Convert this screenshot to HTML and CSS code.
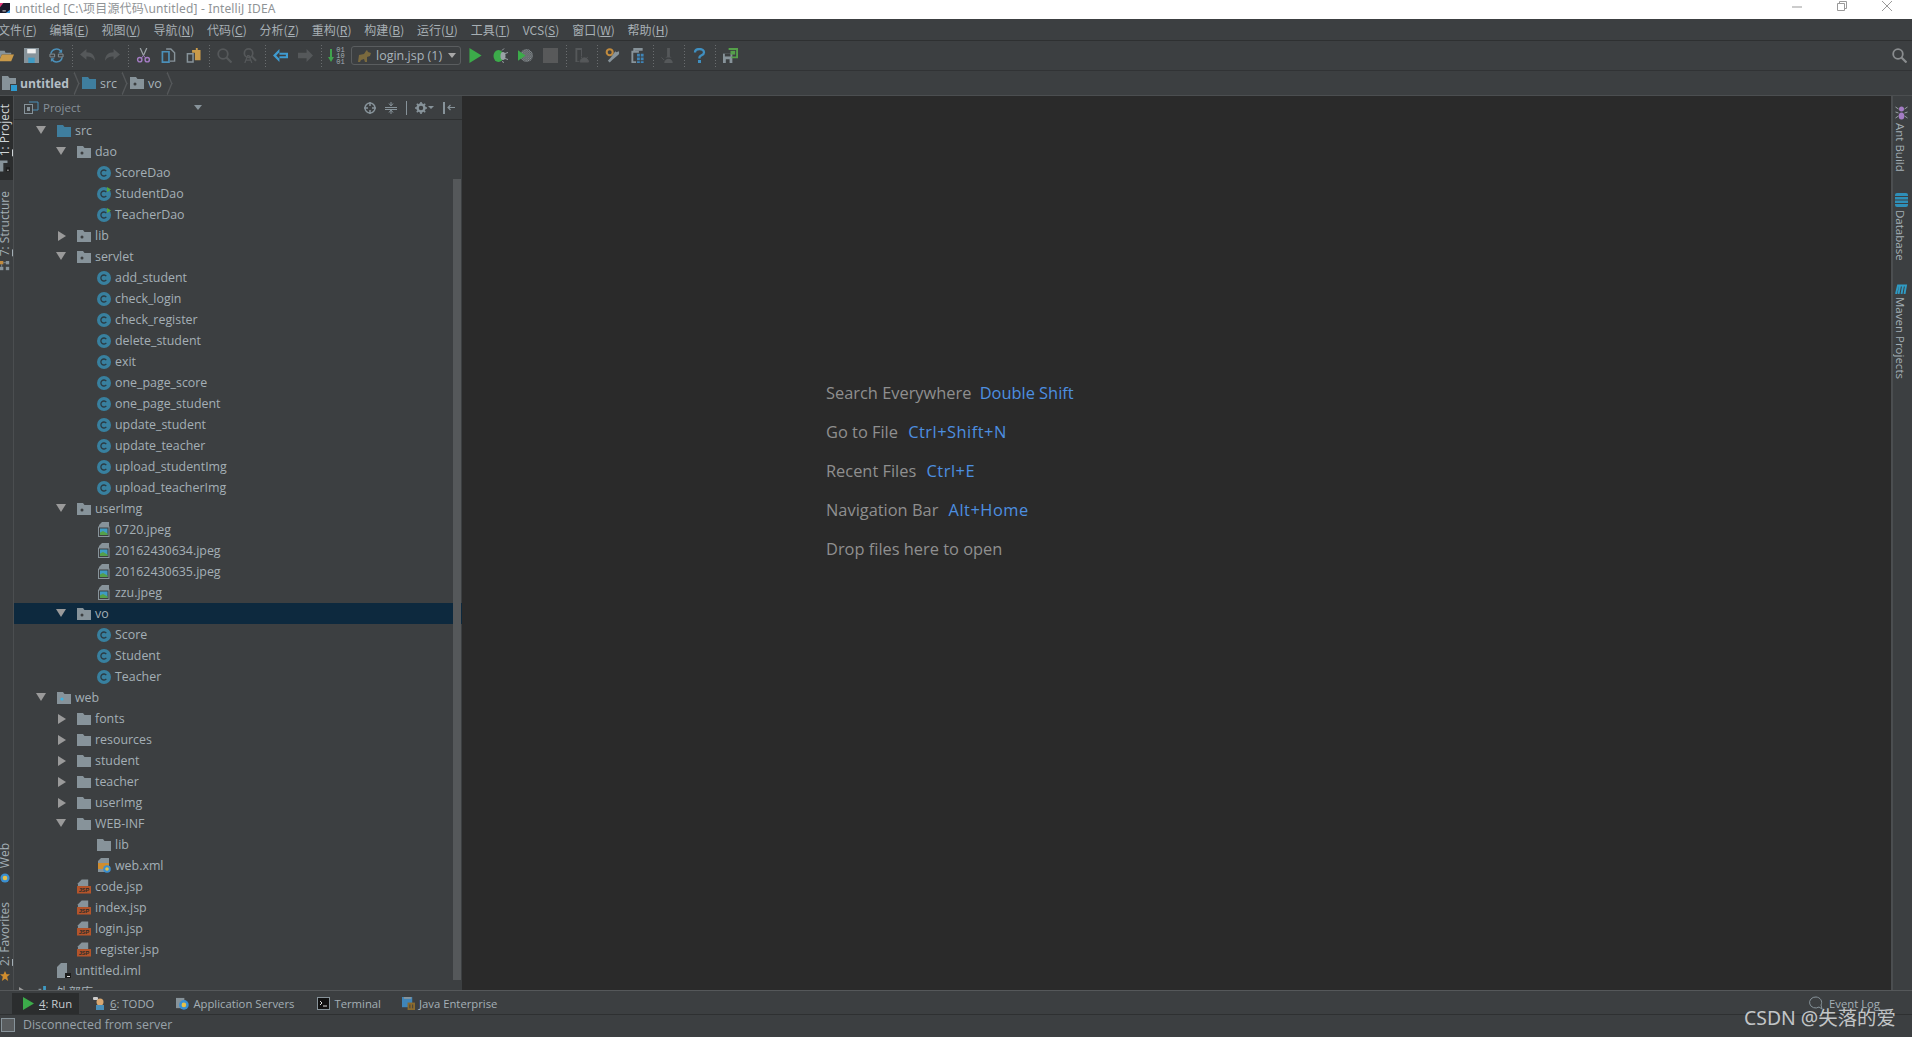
FILE: index.html
```html
<!DOCTYPE html>
<html lang="zh">
<head>
<meta charset="utf-8">
<title>untitled - IntelliJ IDEA</title>
<link rel="stylesheet" href="styles.css">
</head>
<body>
<svg class="defs" width="0" height="0" aria-hidden="true">
  <symbol id="pkg" viewBox="0 0 14 12"><path d="M0 0h6l1.500 2H14v10H0z" fill="#87939a"/><circle cx="5" cy="7" r="1.500" fill="#3c3f41"/></symbol>
  <symbol id="fld" viewBox="0 0 14 12"><path d="M0 0h6l1.500 2H14v10H0z" fill="#87939a"/></symbol>
  <symbol id="src" viewBox="0 0 14 12"><path d="M0 0h6l1.500 2H14v10H0z" fill="#3f7e9e"/></symbol>
  <symbol id="web" viewBox="0 0 14 12"><path d="M0 0h6l1.500 2H14v10H0z" fill="#87939a"/><circle cx="5" cy="7" r="1.600" fill="#3fb2e0"/></symbol>
  <symbol id="cls" viewBox="0 0 14 14"><circle cx="7" cy="7" r="7" fill="#38809f"/><path d="M9.300 5.200A3 3 0 1 0 9.300 8.800" fill="none" stroke="#2b3a42" stroke-width="1.300"/></symbol>
  <symbol id="clr" viewBox="0 0 14 14"><circle cx="7" cy="7" r="7" fill="#38809f"/><path d="M9.300 5.200A3 3 0 1 0 9.300 8.800" fill="none" stroke="#2b3a42" stroke-width="1.300"/><path d="M10 0l4 2.500L10 5z" fill="#54a83c"/></symbol>
  <symbol id="img" viewBox="0 0 12 15"><path d="M4 0h7v5H1V3z" fill="#87939a"/><rect x=".5" y="5" width="10.500" height="9.500" fill="#3c3f41" stroke="#87939a"/><rect x="2" y="6.500" width="7.500" height="6.500" fill="#3f9bc4"/><path d="M2 13l0-2.500 3-1.500 4.500 2.500V13z" fill="#55a04a"/></symbol>
  <symbol id="jsp" viewBox="0 0 15 15"><path d="M5 0h7v7H1V4z" fill="#87939a"/><rect y="7" width="15" height="8" fill="#b4542a"/><text x="7.500" y="13.600" class="jsp-t">JSP</text></symbol>
  <symbol id="xml" viewBox="0 0 14 15"><path d="M4 0h8v14H1V3z" fill="#87939a"/><rect x="1" y="5" width="11" height="6" fill="#d08d2e"/><circle cx="10" cy="11" r="3.800" fill="#3a8fd0"/><circle cx="10" cy="11" r="1.800" fill="#e5c14a"/></symbol>
  <symbol id="iml" viewBox="0 0 14 15"><path d="M4 0h6v15H0V4z" fill="#87939a"/><rect x="8" y="10" width="6" height="5" fill="#1d1d1d"/><rect x="10" y="13" width="3" height="1" fill="#ddd"/></symbol>
  <symbol id="lib" viewBox="0 0 14 13"><rect x="0" y="3" width="3" height="10" fill="#87939a"/><rect x="5" y="0" width="3" height="13" fill="#3f9bc4"/><rect x="10" y="6" width="3" height="7" fill="#87939a"/></symbol>
  <symbol id="mod" viewBox="0 0 15 15"><path d="M0 0h6l1.500 2H14v6H8v6H0z" fill="#87939a"/><rect x="9" y="9" width="6" height="6" fill="#2f9bd0"/></symbol>
</svg>

<div class="app">
  <header class="titlebar">
    <svg class="app-logo" viewBox="0 0 12 12"><rect width="12" height="12" fill="#1a1a2a"/><path d="M0 0h4L0 5z" fill="#e0387a"/><path d="M12 12H7l5-4z" fill="#3a9be0"/><rect x="3" y="9" width="4" height="1" fill="#fff"/></svg>
    <span class="title-text">untitled [C:\项目源代码\untitled] - IntelliJ IDEA</span>
    <div class="win-controls">
      <svg viewBox="0 0 10 10"><path d="M0 6h10" stroke="#999" fill="none"/></svg>
      <svg viewBox="0 0 10 10"><path d="M.5 2.500h7v7h-7zM2.500 2.500v-2h7v7h-2" stroke="#999" fill="none"/></svg>
      <svg viewBox="0 0 10 10"><path d="M0 0l10 10M10 0L0 10" stroke="#999" fill="none"/></svg>
    </div>
  </header>

  <nav class="menubar">
    <span class="m-first">文件(<u>F</u>)</span><span>编辑(<u>E</u>)</span><span>视图(<u>V</u>)</span><span>导航(<u>N</u>)</span><span>代码(<u>C</u>)</span><span>分析(<u>Z</u>)</span><span>重构(<u>R</u>)</span><span>构建(<u>B</u>)</span><span>运行(<u>U</u>)</span><span>工具(<u>T</u>)</span><span>VCS(<u>S</u>)</span><span>窗口(<u>W</u>)</span><span>帮助(<u>H</u>)</span>
  </nav>

  <div class="toolbar">
    <div class="tb"><svg viewBox="0 0 16 14"><path d="M0 2h6l1 2h6v2H3L0 12z" fill="#87939a"/><path d="M3 6h13l-3 7H0z" fill="#c99a4a"/></svg></div>
    <div class="tb"><svg viewBox="0 0 14 14"><path d="M0 0h14v14H0z" fill="#87939a"/><rect x="3" y="1" width="8" height="4" fill="#eee"/><rect x="4" y="9" width="6" height="5" fill="#3f9bc4"/></svg></div>
    <div class="tb"><svg viewBox="0 0 16 16"><path d="M2 6a6 6 0 0 1 11-2M14 10a6 6 0 0 1-11 2" fill="none" stroke="#4b8fb8" stroke-width="1.600"/><path d="M14 1v4h-4zM2 15v-4h4z" fill="#4b8fb8"/><path d="M1 6.500h5v3H1zM10 6.500h5v3h-5z" fill="none" stroke="#87939a"/></svg></div>
    <i class="sep"></i>
    <div class="tb"><svg viewBox="0 0 14 12"><path d="M0 5l6-5v3c5 0 8 3 8 8-2-3-4-4-8-4v3z" fill="#55585a"/></svg></div>
    <div class="tb"><svg viewBox="0 0 14 12"><path d="M14 5L8 0v3C3 3 0 6 0 11c2-3 4-4 8-4v3z" fill="#55585a"/></svg></div>
    <i class="sep"></i>
    <div class="tb"><svg viewBox="0 0 14 16"><path d="M3.500 0l3.500 8M10.500 0L7 8" stroke="#9aa2a6" stroke-width="1.300" fill="none"/><circle cx="3" cy="12.500" r="2.300" fill="none" stroke="#a47cc4" stroke-width="1.500"/><circle cx="11" cy="12.500" r="2.300" fill="none" stroke="#a47cc4" stroke-width="1.500"/><path d="M4.500 11L7 8l2.500 3" stroke="#a47cc4" fill="none"/></svg></div>
    <div class="tb"><svg viewBox="0 0 15 16"><path d="M5 1h5l4 4v9H9" fill="none" stroke="#87939a" stroke-width="1.500"/><path d="M1 4h7v11H1z" fill="none" stroke="#4b8fb8" stroke-width="1.800"/></svg></div>
    <div class="tb"><svg viewBox="0 0 15 16"><path d="M6 2h4V0h2v2h3v11H9V5H6z" fill="#c99a4a"/><path d="M1 6h6v9H1z" fill="none" stroke="#87939a" stroke-width="1.600"/></svg></div>
    <i class="sep"></i>
    <div class="tb"><svg viewBox="0 0 15 15"><circle cx="6" cy="6" r="4.800" fill="none" stroke="#55585a" stroke-width="1.800"/><path d="M9.500 9.500L14.500 14.500" stroke="#55585a" stroke-width="2.200"/></svg></div>
    <div class="tb"><svg viewBox="0 0 16 16"><circle cx="7" cy="5.500" r="4.500" fill="none" stroke="#55585a" stroke-width="1.800"/><path d="M10.500 9L15 13.500" stroke="#55585a" stroke-width="2.200"/><path d="M3 16l3-8h1.500l3 8M4.300 13h4.500" fill="none" stroke="#55585a" stroke-width="1.300"/></svg></div>
    <i class="sep"></i>
    <div class="tb"><svg viewBox="0 0 14 12"><path d="M6 0L0 6l6 6V8.500h8v-5H6z" fill="#3f9bd0"/><path d="M6 3L3 6l3 3V6.800h6V5.200H6z" fill="#3c3f41"/></svg></div>
    <div class="tb"><svg viewBox="0 0 14 12"><path d="M8 0l6 6-6 6V8.500H0v-5h8z" fill="#55585a"/></svg></div>
    <i class="sep"></i>
    <div class="tb tb-make"><svg viewBox="0 0 6 14"><path d="M2 0h2v8h2l-3 5-3-5h2z" fill="#3fa34d"/></svg><span class="bits">01<br>10<br>01</span></div>
    <div class="combo">
      <svg viewBox="0 0 15 14"><path d="M1 13l1-7 5-1 2-3 1-1 1 2 3 1-1 3-3 1v5H8l-1-3-3 1-1 2z" fill="#7b6a3e"/></svg>
      <span>login.jsp (1)</span><b class="caret"></b>
    </div>
    <div class="tb"><svg viewBox="0 0 13 16"><path d="M0 0l13 8-13 8z" fill="#3cab4a"/></svg></div>
    <div class="tb"><svg viewBox="0 0 15 14"><ellipse cx="5.500" cy="7.500" rx="5" ry="6" fill="#3cab4a"/><ellipse cx="10" cy="7.500" rx="2.500" ry="4" fill="#9aa2a6"/><path d="M9 2l2-2M9 13l2 1M12 5l3-1M12 10l3 1" stroke="#9aa2a6"/></svg></div>
    <div class="tb"><svg viewBox="0 0 14 14"><defs><pattern id="chk" width="2" height="2" patternUnits="userSpaceOnUse"><rect width="1" height="1" fill="#9aa2a6"/><rect x="1" y="1" width="1" height="1" fill="#9aa2a6"/></pattern></defs><circle cx="8" cy="7" r="6" fill="url(#chk)"/><path d="M0 2l7 5-7 5z" fill="#3cab4a"/></svg></div>
    <div class="tb"><svg viewBox="0 0 12 12"><rect width="12" height="12" fill="#58595a"/></svg></div>
    <i class="sep"></i>
    <div class="tb"><svg viewBox="0 0 15 16"><path d="M1 0h7v9H7V2H3v12h2v1H1z" fill="#55585a"/><path d="M6 15a4.500 4.500 0 0 1 9 0zM7 9.500l1 1.500M14 9.500l-1 1.500" fill="#55585a" stroke="#55585a"/></svg></div>
    <i class="sep"></i>
    <div class="tb"><svg viewBox="0 0 16 15"><circle cx="5" cy="4" r="3.200" fill="none" stroke="#c08a3e" stroke-width="2.200"/><path d="M15 3l-3 1-1-1-5 7-3 3 2 2 3-3 6-5 1-1z" fill="#87939a"/></svg></div>
    <div class="tb"><svg viewBox="0 0 15 16"><path d="M1 3h8v2H3v9h3v2H1z" fill="#87939a"/><path d="M3 0h10v3H5v1H3z" fill="#87939a"/><path d="M7 6h3v3H7zM11 6h3v3h-3zM7 10h3v3H7zM11 10h3v3h-3zM7 14h3v2H7zM11 14h3v2h-3z" fill="#3f85b8"/></svg></div>
    <i class="sep"></i>
    <div class="tb"><svg viewBox="0 0 15 16"><path d="M6 0h3v9l2 1H4l2-1z" fill="#55585a"/><path d="M3 16a4.500 4.500 0 0 1 9 0z" fill="#55585a"/><path d="M0 10l3 3" stroke="#55585a"/></svg></div>
    <i class="sep"></i>
    <div class="tb"><svg viewBox="0 0 11 15"><path d="M1 4.500C1 2 3 1 5.500 1S10 2.500 10 4.500 8 7 6.500 8 5.500 9 5.500 10.500" fill="none" stroke="#3f8fc0" stroke-width="2.300"/><rect x="4" y="12" width="3" height="3" fill="#3f8fc0"/></svg></div>
    <i class="sep"></i>
    <div class="tb"><svg viewBox="0 0 16 16"><path d="M0 6h10v10H0z" fill="#87939a"/><rect x="2" y="6" width="6" height="3" fill="#3c3f41"/><rect x="3" y="12" width="4" height="4" fill="#3c3f41"/><path d="M6 1h9v9H9" fill="none" stroke="#55a04a" stroke-width="2"/><rect x="8" y="3" width="5" height="4" fill="#55a04a"/></svg></div>
    <div class="tb tb-search"><svg viewBox="0 0 15 15"><circle cx="6" cy="6" r="4.800" fill="none" stroke="#8a8d8f" stroke-width="1.800"/><path d="M9.500 9.500L14.500 14.500" stroke="#8a8d8f" stroke-width="2.200"/></svg></div>
  </div>

  <div class="navbar">
    <svg class="nav-ic" viewBox="0 0 15 15"><use href="#mod"/></svg><b>untitled</b><i class="chev"></i>
    <svg class="nav-ic nav-f" viewBox="0 0 14 12"><use href="#src"/></svg><span>src</span><i class="chev"></i>
    <svg class="nav-ic nav-f" viewBox="0 0 14 12"><use href="#pkg"/></svg><span>vo</span><i class="chev"></i>
  </div>

  <main class="main">
    <aside class="strip-left">
      <div class="sl-group">
        <div class="sl-item sl-active"><span><u>1</u>: Project</span><svg viewBox="0 0 12 13"><path d="M0 0h9v3H4v10H0z" fill="#87939a"/><rect x="7" y="8" width="5" height="5" fill="#1d1d1d"/><rect x="8.500" y="11" width="2" height="1" fill="#ddd"/></svg></div>
        <div class="sl-item"><span><u>7</u>: Structure</span><svg viewBox="0 0 12 12"><rect width="4" height="4" fill="#c08a3e"/><rect x="7" width="4" height="4" fill="#87939a"/><rect y="7" width="4" height="4" fill="#87939a"/><rect x="7" y="7" width="4" height="4" fill="#87939a"/><path d="M4 2h3M2 4v3" stroke="#87939a"/></svg></div>
      </div>
      <div class="sl-group">
        <div class="sl-item"><span>Web</span><svg viewBox="0 0 12 12"><circle cx="6" cy="6" r="5.500" fill="#3a8fd0"/><circle cx="6" cy="6" r="2.800" fill="#e5c14a"/></svg></div>
        <div class="sl-item sl-fav"><span><u>2</u>: Favorites</span><svg viewBox="0 0 12 12"><path d="M6 0l1.800 4H12L8.600 7l1.200 5L6 9.300 2.200 12l1.200-5L0 4h4.200z" fill="#d08d2e"/></svg></div>
      </div>
    </aside>

    <section class="project">
      <div class="p-head">
        <svg class="p-ic" viewBox="0 0 15 13"><path d="M5 1h9v8H9" fill="none" stroke="#4b8fb8"/><rect x=".5" y="3.500" width="8" height="9" fill="#3c3f41" stroke="#87939a"/><rect x="3" y="6" width="3" height="4" fill="#87939a"/></svg>
        <span class="p-title">Project</span>
        <b class="caret p-caret"></b>
        <div class="p-actions">
          <svg viewBox="0 0 12 12"><circle cx="6" cy="6" r="5" fill="none" stroke="#87939a" stroke-width="1.500"/><path d="M6 0v4M6 8v4M0 6h4M8 6h4" stroke="#87939a" stroke-width="1.500"/></svg>
          <svg viewBox="0 0 12 12"><path d="M0 5.500h12M0 7.500h12M6 0v3M4 1.500L6 4l2-2.500M6 12V9M4 10.500L6 8l2 2.500" stroke="#87939a" fill="none"/></svg>
          <i class="p-sep"></i>
          <svg viewBox="0 0 12 12"><circle cx="6" cy="6" r="3.500" fill="none" stroke="#87939a" stroke-width="2.500"/><path d="M6 0v2M6 10v2M0 6h2M10 6h2M1.800 1.800l1.400 1.400M8.800 8.800l1.400 1.400M1.800 10.200l1.400-1.400M8.800 3.200l1.400-1.400" stroke="#87939a" stroke-width="1.600"/></svg>
          <b class="caret p-minicaret"></b>
          <svg viewBox="0 0 12 12"><rect x="0" y="0" width="2" height="12" fill="#87939a"/><path d="M12 5.500H5M7.500 3L5 5.500 7.500 8" stroke="#87939a" fill="none" stroke-width="1.200"/></svg>
        </div>
      </div>
      <div class="tree-wrap">
        <ul class="tree">
          <li class="row l0"><i class="arrow down"></i><svg class="ic f"><use href="#src"/></svg>src</li>
          <li class="row l1"><i class="arrow down"></i><svg class="ic f"><use href="#pkg"/></svg>dao</li>
          <li class="row l2"><i class="arrow"></i><svg class="ic c"><use href="#cls"/></svg>ScoreDao</li>
          <li class="row l2"><i class="arrow"></i><svg class="ic c"><use href="#clr"/></svg>StudentDao</li>
          <li class="row l2"><i class="arrow"></i><svg class="ic c"><use href="#clr"/></svg>TeacherDao</li>
          <li class="row l1"><i class="arrow right"></i><svg class="ic f"><use href="#pkg"/></svg>lib</li>
          <li class="row l1"><i class="arrow down"></i><svg class="ic f"><use href="#pkg"/></svg>servlet</li>
          <li class="row l2"><i class="arrow"></i><svg class="ic c"><use href="#cls"/></svg>add_student</li>
          <li class="row l2"><i class="arrow"></i><svg class="ic c"><use href="#cls"/></svg>check_login</li>
          <li class="row l2"><i class="arrow"></i><svg class="ic c"><use href="#cls"/></svg>check_register</li>
          <li class="row l2"><i class="arrow"></i><svg class="ic c"><use href="#cls"/></svg>delete_student</li>
          <li class="row l2"><i class="arrow"></i><svg class="ic c"><use href="#cls"/></svg>exit</li>
          <li class="row l2"><i class="arrow"></i><svg class="ic c"><use href="#cls"/></svg>one_page_score</li>
          <li class="row l2"><i class="arrow"></i><svg class="ic c"><use href="#cls"/></svg>one_page_student</li>
          <li class="row l2"><i class="arrow"></i><svg class="ic c"><use href="#cls"/></svg>update_student</li>
          <li class="row l2"><i class="arrow"></i><svg class="ic c"><use href="#cls"/></svg>update_teacher</li>
          <li class="row l2"><i class="arrow"></i><svg class="ic c"><use href="#cls"/></svg>upload_studentImg</li>
          <li class="row l2"><i class="arrow"></i><svg class="ic c"><use href="#cls"/></svg>upload_teacherImg</li>
          <li class="row l1"><i class="arrow down"></i><svg class="ic f"><use href="#pkg"/></svg>userImg</li>
          <li class="row l2"><i class="arrow"></i><svg class="ic im"><use href="#img"/></svg>0720.jpeg</li>
          <li class="row l2"><i class="arrow"></i><svg class="ic im"><use href="#img"/></svg>20162430634.jpeg</li>
          <li class="row l2"><i class="arrow"></i><svg class="ic im"><use href="#img"/></svg>20162430635.jpeg</li>
          <li class="row l2"><i class="arrow"></i><svg class="ic im"><use href="#img"/></svg>zzu.jpeg</li>
          <li class="row l1 selected"><i class="arrow down"></i><svg class="ic f"><use href="#pkg"/></svg>vo</li>
          <li class="row l2"><i class="arrow"></i><svg class="ic c"><use href="#cls"/></svg>Score</li>
          <li class="row l2"><i class="arrow"></i><svg class="ic c"><use href="#cls"/></svg>Student</li>
          <li class="row l2"><i class="arrow"></i><svg class="ic c"><use href="#cls"/></svg>Teacher</li>
          <li class="row l0"><i class="arrow down"></i><svg class="ic f"><use href="#web"/></svg>web</li>
          <li class="row l1"><i class="arrow right"></i><svg class="ic f"><use href="#fld"/></svg>fonts</li>
          <li class="row l1"><i class="arrow right"></i><svg class="ic f"><use href="#fld"/></svg>resources</li>
          <li class="row l1"><i class="arrow right"></i><svg class="ic f"><use href="#fld"/></svg>student</li>
          <li class="row l1"><i class="arrow right"></i><svg class="ic f"><use href="#fld"/></svg>teacher</li>
          <li class="row l1"><i class="arrow right"></i><svg class="ic f"><use href="#fld"/></svg>userImg</li>
          <li class="row l1"><i class="arrow down"></i><svg class="ic f"><use href="#fld"/></svg>WEB-INF</li>
          <li class="row l2"><i class="arrow"></i><svg class="ic f"><use href="#fld"/></svg>lib</li>
          <li class="row l2"><i class="arrow"></i><svg class="ic x"><use href="#xml"/></svg>web.xml</li>
          <li class="row l1"><i class="arrow"></i><svg class="ic x"><use href="#jsp"/></svg>code.jsp</li>
          <li class="row l1"><i class="arrow"></i><svg class="ic x"><use href="#jsp"/></svg>index.jsp</li>
          <li class="row l1"><i class="arrow"></i><svg class="ic x"><use href="#jsp"/></svg>login.jsp</li>
          <li class="row l1"><i class="arrow"></i><svg class="ic x"><use href="#jsp"/></svg>register.jsp</li>
          <li class="row l0"><i class="arrow"></i><svg class="ic x"><use href="#iml"/></svg>untitled.iml</li>
          <li class="row lx"><i class="arrow right"></i><svg class="ic f"><use href="#lib"/></svg>外部库</li>
        </ul>
        <div class="scrollbar"></div>
      </div>
    </section>

    <section class="editor">
      <p>Search Everywhere <em>Double Shift</em></p>
      <p>Go to File <em class="key">Ctrl+Shift+N</em></p>
      <p>Recent Files <em class="key">Ctrl+E</em></p>
      <p>Navigation Bar <em class="key">Alt+Home</em></p>
      <p>Drop files here to open</p>
    </section>

    <aside class="strip-right">
      <div class="sr-item"><svg viewBox="0 0 12 14"><ellipse cx="6" cy="3" rx="2.500" ry="2.500" fill="#a47cc4"/><ellipse cx="6" cy="10" rx="2.800" ry="3.500" fill="#a47cc4"/><path d="M0 1l3 2M12 1L9 3M0 6l3 1M12 6L9 7M0 12l3-2M12 12l-3-2" stroke="#9aa2a6"/></svg><span>Ant Build</span></div>
      <div class="sr-item sr-db"><svg viewBox="0 0 13 14"><rect width="13" height="14" rx="2" fill="#2f8fb8"/><path d="M0 3.500h13M0 7h13M0 10.500h13" stroke="#3c3f41"/></svg><span>Database</span></div>
      <div class="sr-item sr-mvn"><svg viewBox="0 0 13 10"><path d="M1 10L3 1.500h8L9.500 10M5 2L3.500 10M8 2L6.500 10" fill="none" stroke="#2f9bc4" stroke-width="1.900"/></svg><span>Maven Projects</span></div>
    </aside>
  </main>

  <footer class="tabs">
    <div class="tab tab-run"><svg viewBox="0 0 11 13"><path d="M0 0l11 6.500L0 13z" fill="#3cab4a"/></svg><span><u>4</u>: Run</span></div>
    <div class="tab tab-todo"><svg viewBox="0 0 13 13"><circle cx="7" cy="5" r="3.500" fill="#d9a871"/><rect x="3" y="8" width="8" height="5" fill="#4b8fb8"/><rect x="0" y="0" width="5" height="3" rx="1" fill="#ccc"/></svg><span><u>6</u>: TODO</span></div>
    <div class="tab tab-app"><svg viewBox="0 0 14 14"><rect y="1" width="9" height="11" fill="#87939a"/><circle cx="8.500" cy="8.500" r="5.200" fill="#3a8fd0"/><circle cx="8.500" cy="8.500" r="2.500" fill="#e5c14a"/></svg><span>Application Servers</span></div>
    <div class="tab tab-term"><svg viewBox="0 0 13 13"><rect x=".5" y=".5" width="12" height="12" fill="#111" stroke="#87939a"/><path d="M3 4l2 2-2 2M6 9h4" stroke="#ddd" fill="none"/></svg><span>Terminal</span></div>
    <div class="tab tab-java"><svg viewBox="0 0 14 14"><rect width="11" height="11" fill="#3f85b8"/><rect x="2" width="8" height="2" fill="#87939a"/><rect x="6" y="6" width="8" height="8" fill="#8a6a2e"/><path d="M8 8h1v4H8zM11 8h1v4h-1z" fill="#3c3f41"/></svg><span>Java Enterprise</span></div>
    <div class="eventlog"><svg viewBox="0 0 14 14"><path d="M7 1a6 5.500 0 1 0 3 10l3 2-1-4a6 5.500 0 0 0-5-8z" fill="none" stroke="#87939a"/></svg><span>Event Log</span></div>
  </footer>

  <div class="statusbar">
    <svg class="st-ic" viewBox="0 0 14 14"><rect x=".5" y=".5" width="13" height="13" fill="#5a5d5f" stroke="#87939a"/></svg>
    <span>Disconnected from server</span>
  </div>
</div>
<div class="watermark">CSDN @失落的爱</div>
</body>
</html>
```

FILE: styles.css
```css
* { box-sizing: border-box; }
html, body { margin: 0; height: 100%; overflow: hidden; background: #3c3f41; }
body {
  font-family: "Open Sans", "Noto Sans CJK SC", sans-serif;
  font-size: 12px;
  color: #a4afb6;
  position: relative;
}
.defs { position: absolute; }
.jsp-t { font: bold 6px "Liberation Sans", sans-serif; fill: #2b2b2b; text-anchor: middle; }
u { text-decoration-thickness: 1px; text-underline-offset: 1px; }
svg { display: block; flex: none; }

.app { display: flex; flex-direction: column; height: 1037px; width: 1912px; overflow: hidden; }

/* title bar */
.titlebar { height: 19px; flex: none; background: #fff; display: flex; align-items: center; padding-bottom: 3px; color: #8f9396; font-size: 12px; font-family: "Noto Sans", "Noto Sans CJK SC", sans-serif; }
.app-logo { width: 10px; height: 12px; margin-right: 5px; }
.title-text { letter-spacing: .15px; white-space: nowrap; }
.win-controls { margin-left: auto; display: flex; gap: 35px; padding-right: 20px; align-items: center; }
.win-controls svg { width: 10px; height: 10px; margin-top: -4px; }

/* menu */
.menubar { height: 22px; flex: none; display: flex; align-items: center; gap: 12.800px; border-bottom: 1px solid #2e3031; font-family: "Noto Sans CJK SC", sans-serif; font-size: 12px; color: #a8b0b5; white-space: nowrap; }
.m-first { margin-left: -2px; }

/* toolbar */
.toolbar { height: 30px; flex: none; display: flex; align-items: center; border-bottom: 1px solid #313335; }
.tb { width: 25px; height: 20px; display: flex; align-items: center; justify-content: center; flex: none; }
.tb:first-child { margin-left: -6px; }
.tb svg { width: 15px; height: 15px; }
.tb-make { gap: 2px; }
.tb-make svg { width: 6px; height: 14px; }
.bits { font: 7px/6px "Liberation Mono", monospace; color: #a4afb6; }
.sep { width: 6px; height: 22px; flex: none; background: repeating-linear-gradient(to bottom, #6a6d6f 0 1px, transparent 1px 3px) center / 1px 100% no-repeat; }
.combo { width: 110px; height: 19px; margin: 0 2px; flex: none; border: 1px solid #5a5d5f; border-radius: 3px; display: flex; align-items: center; gap: 4px; padding: 0 4px 0 5px; color: #a8b3ba; font-size: 12.500px; white-space: nowrap; }
.combo svg { width: 15px; height: 14px; }
.caret { width: 0; height: 0; border-left: 4px solid transparent; border-right: 4px solid transparent; border-top: 5px solid #a8a8a8; display: block; flex: none; }
.combo .caret { margin-left: auto; }
.tb-search { margin-left: auto; }

/* navbar */
.navbar { height: 25px; flex: none; display: flex; align-items: center; padding-left: 2px; border-bottom: 1px solid #4b4e50; font-size: 12.500px; color: #a8b3ba; }
.nav-ic { width: 15px; height: 15px; margin-right: 3px; }
.nav-f { width: 14px; height: 12px; margin-right: 4px; }
.navbar b { color: #b4bec6; font-weight: 700; font-size: 12.200px; }
.chev { width: 7px; height: 7px; margin: 0 4px 0 2px; border-top: 1px solid #55585a; border-right: 1px solid #55585a; transform: scaleY(2.400) rotate(45deg); flex: none; }

/* main */
.main { flex: 1; min-height: 0; display: flex; }
.strip-left { width: 14px; flex: none; border-right: 1px solid #4b4e50; display: flex; flex-direction: column; justify-content: space-between; overflow: hidden; }
.sl-group { display: flex; flex-direction: column; }
.sl-group:last-child { padding-bottom: 8px; }
.sl-item { display: flex; flex-direction: column; align-items: flex-start; width: 13px; gap: 4px; }
.sl-item span { writing-mode: vertical-rl; transform: rotate(180deg); white-space: nowrap; font-size: 12px; line-height: 10px; width: 10px; }
.sl-item svg { width: 10px; height: 12px; }
.sl-active { background: #2b2d2e; color: #d0d5d8; height: 84px; justify-content: flex-end; padding-bottom: 8px; margin-bottom: 11px; }
.sl-fav { margin-top: 18px; }

.project { width: 448px; flex: none; display: flex; flex-direction: column; }
.p-head { height: 24px; flex: none; display: flex; align-items: center; padding-left: 10px; border-bottom: 1px solid #2e3031; color: #87919a; }
.p-ic { width: 15px; height: 13px; margin-right: 4px; }
.p-title { font-size: 11.500px; }
.p-caret { margin-left: 113px; border-top-color: #87939a; }
.p-actions { margin-left: auto; display: flex; align-items: center; padding-right: 7px; gap: 9px; }
.p-actions svg { width: 12px; height: 12px; }
.p-sep { width: 1px; height: 14px; background: #87939a; margin-right: -1px; }
.p-minicaret { border-left-width: 3px; border-right-width: 3px; border-top-width: 3px; border-top-color: #87939a; margin-left: -8px; }

.tree-wrap { flex: 1; min-height: 0; position: relative; overflow: hidden; }
.tree { list-style: none; margin: 0; padding: 0; }
.row { height: 21px; display: flex; align-items: center; white-space: nowrap; font-size: 12.400px; color: #a4afb6; }
.selected { background: #0d293e; }
.l0 { padding-left: 21px; }
.l1 { padding-left: 41px; }
.l2 { padding-left: 61px; }
.lx { padding-left: 2px; }
.arrow { width: 22px; flex: none; height: 12px; display: block; position: relative; }
.arrow.down::before { content: ""; position: absolute; left: 1px; top: 1px; border-left: 5px solid transparent; border-right: 5px solid transparent; border-top: 8px solid #9a9a9a; }
.arrow.right::before { content: ""; position: absolute; left: 3px; top: 1px; border-top: 5px solid transparent; border-bottom: 5px solid transparent; border-left: 8px solid #9a9a9a; }
.ic { margin-right: 4px; }
.ic.f { width: 14px; height: 12px; }
.ic.c { width: 14px; height: 14px; }
.ic.im { width: 14px; height: 15px; }
.ic.x { width: 14px; height: 15px; }
.scrollbar { position: absolute; right: 1px; top: 59px; width: 8px; height: 801px; background: #55585a; }

/* editor */
.editor { flex: 1; background: #2a2a2a; padding: 286px 0 0 364px; color: #8f8f8f; font-size: 16.400px; }
.editor p { margin: 0 0 17px; line-height: 22px; height: 22px; white-space: nowrap; }
.editor em { font-style: normal; color: #4d8fe0; margin-left: 4px; }
.editor .key { margin-left: 6px; letter-spacing: .5px; }

.strip-right { width: 21px; flex: none; border-left: 2px solid #4b4e50; display: flex; flex-direction: column; align-items: flex-start; overflow: hidden; padding: 10px 0 0 2px; }
.sr-item { display: flex; flex-direction: column; align-items: flex-start; gap: 3px; }
.sr-item span { writing-mode: vertical-rl; white-space: nowrap; font-size: 11.500px; line-height: 10px; width: 10px; }
.sr-item svg { width: 13px; height: 14px; }
.sr-db { margin-top: 21px; }
.sr-mvn { margin-top: 24px; }
.sr-mvn svg { height: 10px; }

/* tool tabs */
.tabs { height: 25px; flex: none; display: flex; align-items: center; padding-top: 1px; border-top: 1px solid #55585a; border-bottom: 1px solid #2e3031; font-size: 11.300px; }
.tab { display: flex; align-items: center; height: 21px; gap: 4px; flex: none; }
.tab svg { width: 13px; height: 13px; }
.tab-run { margin-left: 12px; width: 67px; padding-left: 11px; background: #2b2d2e; color: #c5cbcf; gap: 5px; }
.tab-run svg { width: 11px; height: 13px; }
.tab-todo { margin-left: 14px; }
.tab-app { margin-left: 22px; }
.tab-term { margin-left: 23px; }
.tab-java { margin-left: 21px; }
.eventlog { margin-left: auto; margin-right: 32px; display: flex; align-items: center; gap: 6px; }
.eventlog svg { width: 14px; height: 14px; }

.statusbar { height: 22px; flex: none; display: flex; align-items: center; gap: 8px; padding: 0 0 3px 1px; color: #98a2a9; font-size: 12.400px; }
.st-ic { width: 14px; height: 14px; }

.watermark { position: absolute; left: 1744px; top: 1005px; font-size: 19.400px; line-height: 26px; color: #c2c5c7; font-family: "Noto Sans", "Noto Sans CJK SC", sans-serif; white-space: nowrap; }
```
